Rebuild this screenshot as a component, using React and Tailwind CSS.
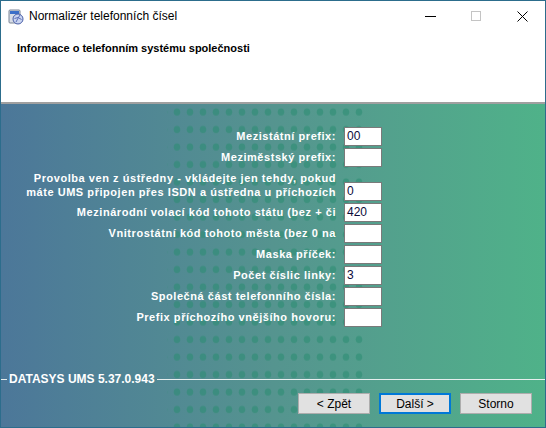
import React from 'react';

const rows = [
  { label: 'Mezistátní prefix:', value: '00' },
  { label: 'Meziměstský prefix:', value: '' },
  {
    label: ['Provolba ven z ústředny - vkládejte jen tehdy, pokud', 'máte UMS připojen přes ISDN a ústředna u příchozích'],
    value: '0',
  },
  { label: 'Mezinárodní volací kód tohoto státu (bez + či', value: '420' },
  { label: 'Vnitrostátní kód tohoto města (bez 0 na', value: '' },
  { label: 'Maska příček:', value: '' },
  { label: 'Počet číslic linky:', value: '3' },
  { label: 'Společná část telefonního čísla:', value: '' },
  { label: 'Prefix příchozího vnějšího hovoru:', value: '' },
];

const AppIcon = () => (
  <svg width="16" height="16" viewBox="0 0 16 16">
    <rect x="1" y="1" width="11" height="13" rx="1" fill="#d8dde6" stroke="#7a8596" />
    <rect x="2" y="2" width="9" height="3" fill="#3b6fc9" />
    <circle cx="10" cy="10" r="5" fill="#c9d4f0" stroke="#4a5fa8" />
    <path d="M6.5 9.5 Q10 7 13.5 10.5 M8 13 Q10 9 12 6" stroke="#5b6fb8" fill="none" strokeWidth="1" />
  </svg>
);

const DotPattern = () => (
  <svg className="absolute left-[166px] top-0 h-full w-[200px] pointer-events-none" aria-hidden="true">
    <defs>
      <pattern id="dots" x="4" y="0" width="13" height="17.5" patternUnits="userSpaceOnUse">
        <ellipse cx="6" cy="8" rx="3.3" ry="3.7" fill="#2a8c70" fillOpacity="0.55" />
      </pattern>
    </defs>
    <rect width="100%" height="100%" fill="url(#dots)" />
  </svg>
);

const FormRow = ({ label, value }) => {
  const multi = Array.isArray(label);
  return (
    <div className={`flex justify-end gap-[8px] ${multi ? 'items-end h-[32px]' : 'items-center h-[19px]'}`}>
      <div className={`text-right text-white font-bold text-[11px] tracking-[0.55px] whitespace-nowrap ${multi ? 'leading-[14px] mb-[2px]' : 'leading-[19px]'}`}>
        {multi ? label.map((l) => <div key={l}>{l}</div>) : label}
      </div>
      <div className="w-[38px] h-[19px] bg-white border border-[#7a7a7a] text-[12px] leading-[17px] pl-[2px] text-[#0b0b3a] font-normal">
        {value}
      </div>
    </div>
  );
};

const Button = ({ children, primary }) => (
  <button
    className={`w-[72px] h-[21px] bg-[#e1e1e1] text-[12px] text-black flex items-center justify-center ${primary ? 'border-2 border-[#0078d7]' : 'border border-[#adadad]'}`}
  >
    {children}
  </button>
);

export default function App() {
  return (
    <div className="w-[546px] h-[428px] border border-[#2c6d8c] flex flex-col overflow-hidden font-['Liberation_Sans',sans-serif]">
      {/* Title bar */}
      <div className="h-[30px] bg-white flex items-center shrink-0">
        <div className="ml-[7px] mt-[1px]">
          <AppIcon />
        </div>
        <span className="ml-[5px] text-[12px] text-black">Normalizér telefonních čísel</span>
        <div className="ml-auto flex items-center h-full">
          <div className="w-[46px] h-full flex items-center justify-center">
            <div className="w-[11px] h-px bg-black" />
          </div>
          <div className="w-[46px] h-full flex items-center justify-center">
            <div className="w-[10px] h-[10px] border border-[#c4c4c4]" />
          </div>
          <div className="w-[46px] h-full flex items-center justify-center">
            <svg width="11" height="11" viewBox="0 0 11 11">
              <path d="M0.5 0.5 L10.5 10.5 M10.5 0.5 L0.5 10.5" stroke="#000" strokeWidth="1" />
            </svg>
          </div>
        </div>
      </div>

      {/* Header */}
      <div className="h-[71px] bg-white shrink-0 px-[16px] pt-[10px]">
        <div className="text-[11px] font-bold text-black leading-[14px]">Informace o telefonním systému společnosti</div>
      </div>
      <div className="h-[2px] shrink-0 bg-[#a0a0a0]" />

      {/* Body */}
      <div className="flex-1 relative flex flex-col bg-gradient-to-r from-[#4c7799] via-[#55948f] to-[#4fb289]">
        <DotPattern />
        <div className="relative flex flex-col gap-[2px] pt-[23px] w-[381px]">
          {rows.map((r, i) => (
            <FormRow key={i} label={r.label} value={r.value} />
          ))}
        </div>

        <div className="relative mt-auto flex items-center h-[14px]">
          <div className="w-[6px] h-px bg-[#e6eeee]" />
          <span className="px-[2px] text-white font-bold text-[12px] leading-[14px]">DATASYS UMS 5.37.0.943</span>
          <div className="flex-1 h-px bg-[#e6eeee]" />
        </div>
        <div className="relative flex justify-end gap-[9px] pr-[13px] mt-[7px] pb-[13px]">
          <Button>&lt; Zpět</Button>
          <Button primary>Další &gt;</Button>
          <Button>Storno</Button>
        </div>
      </div>
    </div>
  );
}
